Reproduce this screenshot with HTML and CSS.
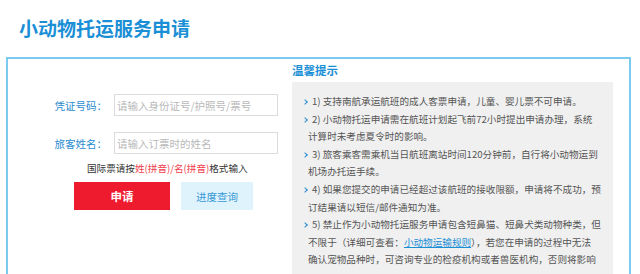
FILE: index.html
```html
<!DOCTYPE html>
<html lang="zh-CN">
<head>
    <meta charset="UTF-8">
    <title>小动物托运服务申请</title>
    <link rel="stylesheet" href="styles.css">
</head>
<body>
    <h1 class="page-title">小动物托运服务申请</h1>

    <div class="apply-box">
        <div class="form-panel">
            <div class="form-row">
                <label for="certNo">凭证号码：</label>
                <input id="certNo" type="text" placeholder="请输入身份证号/护照号/票号">
            </div>
            <div class="form-row">
                <label for="paxName">旅客姓名：</label>
                <input id="paxName" type="text" placeholder="请输入订票时的姓名">
            </div>
            <p class="form-note">国际票请按<span class="red">姓(拼音)/名(拼音)</span>格式输入</p>
            <div class="btn-row">
                <button class="btn-apply">申请</button>
                <button class="btn-query">进度查询</button>
            </div>
        </div>

        <div class="tips-panel">
            <h3>温馨提示</h3>
            <ul class="tips-list">
                <li>1) 支持南航承运航班的成人客票申请，儿童、婴儿票不可申请。</li>
                <li>2) 小动物托运申请需在航班计划起飞前72小时提出申请办理，系统<br>计算时未考虑夏令时的影响。</li>
                <li>3) 旅客乘客需乘机当日航班离站时间120分钟前，自行将小动物运到<br>机场办托运手续。</li>
                <li>4) 如果您提交的申请已经超过该航班的接收限额，申请将不成功，预<br>订结果请以短信/邮件通知为准。</li>
                <li>5) 禁止作为小动物托运服务申请包含短鼻猫、短鼻犬类动物种类，但<br>不限于（详细可查看：<a href="#">小动物运输规则</a>），若您在申请的过程中无法<br>确认宠物品种时，可咨询专业的检疫机构或者兽医机构，否则将影响</li>
            </ul>
        </div>
    </div>
</body>
</html>
```

FILE: styles.css
```css
body {
    margin: 0;
    font-family: "Noto Sans CJK SC", "Noto Sans", sans-serif;
    background: #fff;
    color: #555;
}

.page-title {
    margin: 0 0 15px 0;
    padding: 14px 0 0 19px;
    font-size: 19px;
    line-height: 28px;
    font-weight: bold;
    color: #1b8fd6;
}

.apply-box {
    display: flex;
    margin: 0 9px 0 6px;
    border: 2px solid #7ccbee;
    border-bottom: none;
    min-height: 240px;
}

/* left: form */
.form-panel {
    width: 276px;
    padding-top: 35px;
}

.form-row {
    display: flex;
    align-items: center;
    height: 22px;
    margin-bottom: 16px;
}

.form-row + .form-row {
    margin-bottom: 7px;
}

.form-row label {
    width: 99px;
    margin-right: 7px;
    text-align: right;
    font-size: 10.5px;
    color: #2a8bd0;
}

.form-row input {
    box-sizing: border-box;
    width: 164px;
    height: 22px;
    padding: 0 2px;
    border: 1px solid #dcdcdc;
    font-family: inherit;
    font-size: 10.5px;
    color: #333;
    outline: none;
}

.form-row input::placeholder {
    color: #b8b8b8;
}

.form-note {
    margin: 0 0 7px 0;
    padding-left: 79px;
    font-size: 9.6px;
    line-height: 14px;
    color: #333;
}

.form-note .red {
    color: #f03c4c;
}

.btn-row {
    display: flex;
    gap: 11px;
    padding-left: 66px;
}

.btn-row button {
    height: 28px;
    border: none;
    font-family: inherit;
    cursor: pointer;
}

.btn-apply {
    width: 96px;
    background: #ee1b2e;
    color: #fff;
    font-size: 11.5px;
    font-weight: bold;
}

.btn-query {
    width: 72px;
    background: #def3fc;
    color: #3b9ad6;
    font-size: 10.5px;
}

/* right: tips */
.tips-panel {
    width: 321px;
    margin-left: 8px;
    padding-top: 3px;
}

.tips-panel h3 {
    margin: 0 0 4px 0;
    font-size: 11.5px;
    line-height: 16px;
    font-weight: bold;
    color: #1b8fd6;
}

.tips-list {
    margin: 0;
    padding: 11px 6px 30px 16px;
    list-style: none;
    background: #f0f0f0;
    font-size: 9.6px;
    line-height: 17.6px;
    color: #555;
    white-space: nowrap;
}

.tips-list li {
    position: relative;
    text-indent: 4px;
}

.tips-list li::before {
    content: "";
    position: absolute;
    left: -5px;
    top: 7px;
    width: 3px;
    height: 3px;
    border-top: 1.5px solid #2a8bd0;
    border-right: 1.5px solid #2a8bd0;
    transform: rotate(45deg);
}

.tips-list a {
    color: #1b8fd6;
    text-decoration: underline;
}
```
